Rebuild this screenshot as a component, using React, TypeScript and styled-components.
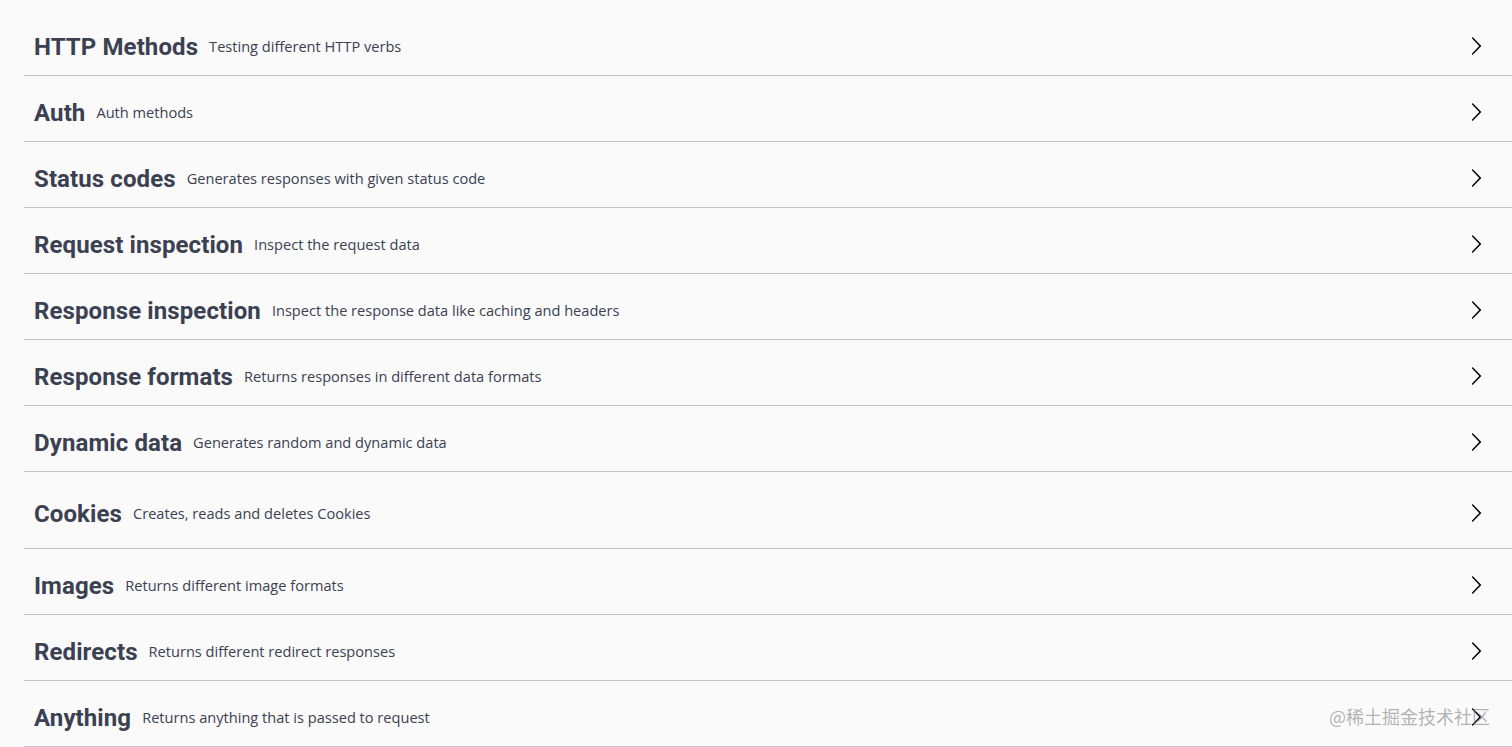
import styled, { createGlobalStyle } from "styled-components";

const GlobalStyle = createGlobalStyle`
  html, body {
    margin: 0;
    padding: 0;
    background: #fafafa;
  }
  body {
    font-family: "Open Sans", "Liberation Sans", sans-serif;
    color: #3b4151;
  }
`;

const Page = styled.div`
  position: relative;
  min-height: 747px;
  padding: 10px 0 0 24px;
  box-sizing: border-box;
  overflow: hidden;
`;

const TagList = styled.div`
  display: flex;
  flex-direction: column;
`;

const TagRow = styled.div<{ $tall?: boolean }>`
  display: flex;
  align-items: center;
  height: 40px;
  padding: ${(p) => (p.$tall ? "21px 26px 15px 10px" : "16px 26px 9px 10px")};
  border-bottom: 1px solid rgba(59, 65, 81, 0.3);
  cursor: pointer;
`;

const TagTitle = styled.h3`
  margin: 2px 0 0;
  font-family: Roboto, "Liberation Sans", sans-serif;
  font-size: 24px;
  font-weight: 700;
  letter-spacing: 0.1px;
  color: #3b4151;
  white-space: nowrap;
`;

const TagDescription = styled.small`
  flex: 1;
  margin-bottom: 1px;
  padding: 0 10px 0 11px;
  font-family: "Open Sans", "Liberation Sans", sans-serif;
  font-size: 14.6px;
  font-weight: 400;
  color: #3b4151;
  white-space: nowrap;
`;

const Arrow = styled.svg`
  width: 20px;
  height: 20px;
  flex-shrink: 0;
  fill: #000;
`;

const Watermark = styled.div`
  position: absolute;
  right: 22px;
  bottom: 18px;
  font-family: "Noto Sans CJK SC", "Open Sans", sans-serif;
  font-size: 18px;
  color: rgba(130, 130, 130, 0.6);
  pointer-events: none;
`;

const tags = [
  { name: "HTTP Methods", description: "Testing different HTTP verbs" },
  { name: "Auth", description: "Auth methods" },
  { name: "Status codes", description: "Generates responses with given status code" },
  { name: "Request inspection", description: "Inspect the request data" },
  { name: "Response inspection", description: "Inspect the response data like caching and headers" },
  { name: "Response formats", description: "Returns responses in different data formats" },
  { name: "Dynamic data", description: "Generates random and dynamic data" },
  { name: "Cookies", description: "Creates, reads and deletes Cookies", tall: true },
  { name: "Images", description: "Returns different image formats" },
  { name: "Redirects", description: "Returns different redirect responses" },
  { name: "Anything", description: "Returns anything that is passed to request" },
];

export default function App() {
  return (
    <>
      <GlobalStyle />
      <Page>
        <TagList>
          {tags.map((tag) => (
            <TagRow key={tag.name} $tall={tag.tall}>
              <TagTitle>{tag.name}</TagTitle>
              <TagDescription>{tag.description}</TagDescription>
              <Arrow viewBox="0 0 20 20">
                <path d="M13.25 10L6.109 2.58a.697.697 0 0 1 0-.979.68.68 0 0 1 .969 0l7.83 7.908a.697.697 0 0 1 0 .979l-7.83 7.908a.68.68 0 0 1-.969 0 .697.697 0 0 1 0-.979L13.25 10z" />
              </Arrow>
            </TagRow>
          ))}
        </TagList>
        <Watermark>@稀土掘金技术社区</Watermark>
      </Page>
    </>
  );
}
